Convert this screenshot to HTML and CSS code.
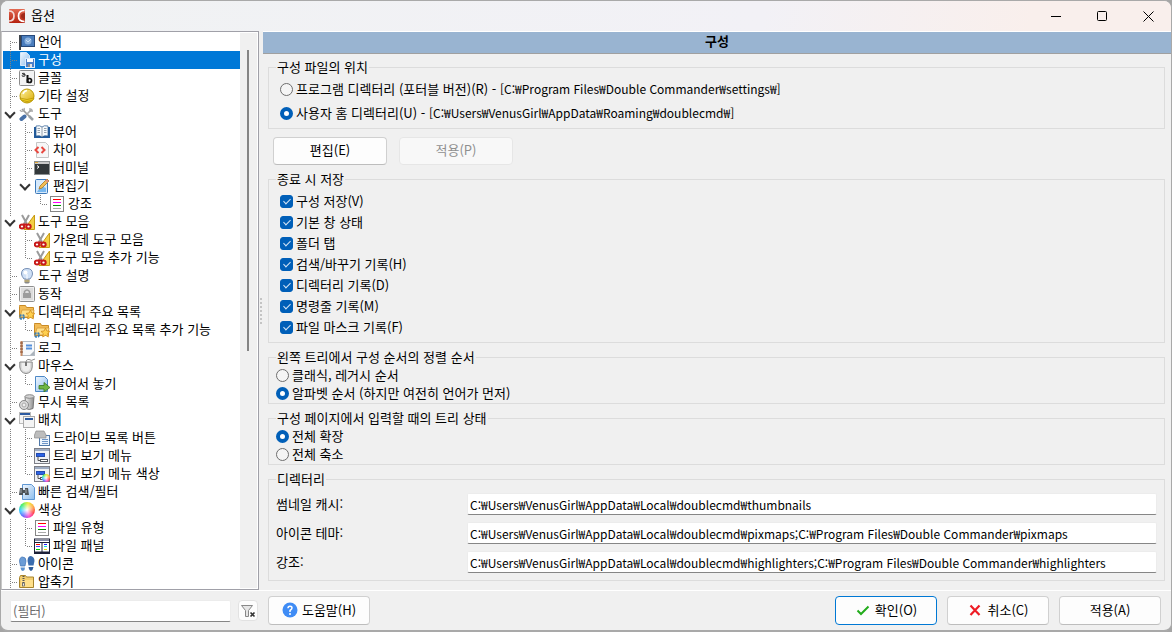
FILE: index.html
```
<!DOCTYPE html>
<html lang="ko">
<head>
  <meta charset="UTF-8">
  <meta name="viewport" content="width=device-width, initial-scale=1.0">
  <title>옵션</title>
  <link rel="stylesheet" href="styles.css">
</head>
<body>
  <!-- 아이콘 모음 -->
  <svg class="sprite" width="0" height="0" aria-hidden="true">
    <defs>
      <linearGradient id="gold" x1="0" y1="0" x2="1" y2="1"><stop offset="0" stop-color="#fff3a0"/><stop offset="1" stop-color="#d9a800"/></linearGradient>
      <linearGradient id="steel" x1="0" y1="0" x2="1" y2="0"><stop offset="0" stop-color="#f4f4f4"/><stop offset="1" stop-color="#8c8c8c"/></linearGradient>
      <linearGradient id="sky" x1="0" y1="0" x2="1" y2="1"><stop offset="0" stop-color="#f2f8ff"/><stop offset="1" stop-color="#8dbdec"/></linearGradient>
      <linearGradient id="red" x1="0" y1="0" x2="0" y2="1"><stop offset="0" stop-color="#e26a52"/><stop offset="1" stop-color="#b5220f"/></linearGradient>
    </defs>
    <symbol id="i-app" viewBox="0 0 16 16">
      <rect y="1" width="16" height="14" rx="1" fill="url(#red)"/>
      <path d="M0 3q5 0 5 5t-5 5" fill="none" stroke="#f3dcd8" stroke-width="1.700"/>
      <path d="M15.500 2.500q-6 0-6 5.500t6 5.500" fill="none" stroke="#fff" stroke-width="1.700"/>
      <path d="M16 5q-4 0-4 3t4 3z" fill="#a02a1a"/>
    </symbol>
    <symbol id="i-flag" viewBox="0 0 16 16">
      <path d="M1 1v15" stroke="#3f454c" stroke-width="2"/>
      <rect x="2.500" y="1.500" width="13" height="11" fill="#4a7dbd" stroke="#27497a"/>
      <circle cx="9" cy="7" r="3.500" fill="#8db3df"/><path d="M7 6l2 2 3-3" stroke="#c9dff5" fill="none"/>
    </symbol>
    <symbol id="i-config" viewBox="0 0 16 16">
      <path d="M1.500.5h6l3 3v10h-9z" fill="url(#sky)" stroke="#d7e8fa"/>
      <rect x="6.500" y="6.500" width="9" height="9" fill="#4a7fc9" stroke="#dbe9fa"/>
      <rect x="8" y="7" width="6" height="3" fill="#fff"/><rect x="9" y="12" width="4" height="3" fill="#e4e4e4"/><path d="M10 12v3" stroke="#333"/>
    </symbol>
    <symbol id="i-font" viewBox="0 0 16 16">
      <rect x=".5" y=".5" width="15" height="15" rx="1" fill="#f3f3f3" stroke="#8d8d8d"/>
      <path d="M3 3.500q3-1 3 1V6q-3 1-3-.3T6 4.500" fill="none" stroke="#333"/>
      <path d="M8.500 5v8" stroke="#111" stroke-width="2"/><circle cx="10.500" cy="10.500" r="2" fill="none" stroke="#111" stroke-width="1.700"/>
    </symbol>
    <symbol id="i-helmet" viewBox="0 0 16 16">
      <circle cx="8" cy="8" r="7" fill="url(#gold)" stroke="#b99700"/>
      <path d="M1 10q7 3 14 0l-1 2q-6 3-12 0z" fill="#f0d020" stroke="#b39100" stroke-width=".7"/>
      <path d="M4 6q1-3 4-3.500" stroke="#fff" stroke-width="1.500" fill="none"/>
    </symbol>
    <symbol id="i-tools" viewBox="0 0 16 16">
      <path d="M3 3l8 8" stroke="#999" stroke-width="1.700"/><path d="M10 10l4 4" stroke="#9ba0a4" stroke-width="2.500"/>
      <path d="M13 3L7 9" stroke="#aaa" stroke-width="1.700"/><path d="M5.500 10.500L2.500 13" stroke="#4870a6" stroke-width="4" stroke-linecap="round"/>
      <path d="M1 4q1 2 3 1t1-3M11 2v3h3" fill="none" stroke="#a6a6a6" stroke-width="1.300"/>
    </symbol>
    <symbol id="i-book" viewBox="0 0 16 16">
      <path d="M0 3h16v11H0z" fill="#225b9c"/><path d="M2 2q4-1 6 1 2-2 6-1v10q-4-1-6 1-2-2-6-1z" fill="#f7fafc" stroke="#27588e" stroke-width=".7"/>
      <path d="M8 3v10M3.500 4.500H6M3.500 6.500H6M3.500 8.500H6M10 4.500h2.500M10 6.500h2.500M10 8.500h2.500" stroke="#7d8c99" stroke-width=".8"/>
    </symbol>
    <symbol id="i-diff" viewBox="0 0 16 16">
      <path d="M2.500.5h9l3 3v12h-12z" fill="#f7f7f7" stroke="#c5c5c5"/>
      <path d="M4.500 5L1.500 8l3 3M7.500 5l3 3-3 3" fill="none" stroke="#e8483f" stroke-width="2"/>
    </symbol>
    <symbol id="i-term" viewBox="0 0 16 16">
      <rect x=".5" y="1.500" width="15" height="13" fill="#33383a" stroke="#8d9192"/>
      <rect x="1" y="2" width="14" height="2" fill="#c9c9c9"/><path d="M1 2.500h3" stroke="#e3a735"/><path d="M3 5.500l2 1.500-2 1.500" fill="none" stroke="#fff"/>
    </symbol>
    <symbol id="i-edit" viewBox="0 0 16 16">
      <rect x="1.500" y="1.500" width="12" height="14" rx="1" fill="#d6e9fb" stroke="#3c78b8"/>
      <path d="M3 14l4-6 5 2v4z" fill="#77b7ee"/><path d="M5 11l1-3 7-7 2 2-7 7z" fill="#f2bd54" stroke="#a87522" stroke-width=".8"/><path d="M12 2l2 2" stroke="#de8d83" stroke-width="2"/>
    </symbol>
    <symbol id="i-lines" viewBox="0 0 16 16">
      <rect x="1.500" y=".5" width="13" height="15" fill="#fff" stroke="#858585"/>
      <path d="M4 3.500h8" stroke="#f00"/><path d="M4 6.500h8" stroke="#f0f"/><path d="M4 9.500h8" stroke="#009000"/><path d="M4 12.500h8" stroke="#aaa"/>
    </symbol>
    <symbol id="i-cut" viewBox="0 0 16 16">
      <path d="M15.500 1v14.500H5z" fill="#f3cf45" stroke="#c79a12"/>
      <path d="M3 1l5 9M10 1L5 10" stroke="#9b9b9b" stroke-width="2"/>
      <ellipse cx="3" cy="12.500" rx="2.200" ry="1.900" fill="#fff" stroke="#c81a1a" stroke-width="2"/><ellipse cx="9.500" cy="12.500" rx="2.200" ry="1.900" fill="#fff" stroke="#c81a1a" stroke-width="2"/>
      <path d="M4 10.500h4" stroke="#c81a1a" stroke-width="2"/>
    </symbol>
    <symbol id="i-bulb" viewBox="0 0 16 16">
      <path d="M8 .5q5.500 0 5.500 5.500 0 2-2.500 5H5Q2.500 8 2.500 6 2.500.5 8 .5z" fill="#cfe0f6" stroke="#7790b5"/>
      <circle cx="6.500" cy="4.500" r="2" fill="#fff"/><path d="M8 6v5" stroke="#fff"/><path d="M5.500 11.500h5v3l-1 1h-3l-1-1z" fill="#888"/><path d="M5.500 13h5" stroke="#e2c562"/>
    </symbol>
    <symbol id="i-lock" viewBox="0 0 16 16">
      <rect x=".5" y=".5" width="15" height="15" rx="1" fill="#efefef" stroke="#8f8f8f"/><rect x="2" y="2" width="12" height="12" fill="#dcdcdc"/>
      <rect x="4" y="7" width="8" height="5" fill="#9b9b9b"/><path d="M5.500 7V5.500q2.500-3 5 0V7" fill="none" stroke="#9b9b9b" stroke-width="1.500"/>
    </symbol>
    <symbol id="i-folder" viewBox="0 0 16 16">
      <path d="M.5 2.500v-1h6l1 2h7v10H.5z" fill="#f2bb55" stroke="#c98a25"/><path d="M1 13l2-7h12l-1 7z" fill="#ffe08c" stroke="#d49a37" stroke-width=".8"/>
      <path d="M11.500 6l1.400 3 3 .4-2.200 2.200.6 3.400-2.800-1.700L8.700 15l.6-3.400L7 9.400l3-.4z" fill="#ffd04e" stroke="#d18c1d" stroke-width=".8"/><circle cx="3" cy="13" r="2" fill="none" stroke="#3c7fb5" stroke-width="2" stroke-dasharray="2 1"/>
    </symbol>
    <symbol id="i-log" viewBox="0 0 16 16">
      <rect x="3" y="1.500" width="12.500" height="14" fill="#f7f9fb" stroke="#b5bcc4"/><path d="M2.500 1v15" stroke="#c58a62" stroke-width="2"/><path d="M1 3h3M1 6h3M1 9h3M1 12h3" stroke="#884b2b"/>
      <path d="M7 5.500h6M7 8.500h6" stroke="#5590dc" stroke-width="2"/><path d="M11 15l4-4v4z" fill="#aab3bb"/>
    </symbol>
    <symbol id="i-mouse" viewBox="0 0 16 16">
      <path d="M7 5q0-4 3-3.500 2 2 6-.5" fill="none" stroke="#8b8b8b"/><path d="M.8 4h12.400v5q-.5 6-6.200 6.500Q1.500 15 .8 9z" fill="#dcdcdc" stroke="#888"/>
      <path d="M3 5v5q.5 3 4 3.500 3.500-.5 4-3.500V5z" fill="#efefef"/><rect x="6" y="4" width="2" height="4" fill="#777"/>
    </symbol>
    <symbol id="i-drop" viewBox="0 0 16 16">
      <path d="M1.500.5h9l3 3v12h-12z" fill="url(#sky)" stroke="#4d88c6"/><path d="M5 9.500h5V6.500l6 5-6 4.500v-3H5z" fill="#6fb645" stroke="#38761d" stroke-width=".8"/>
    </symbol>
    <symbol id="i-trash" viewBox="0 0 16 16">
      <path d="M6 2.500h9l-1 12q-4 2-7 0z" fill="url(#steel)" stroke="#777"/><ellipse cx="10.500" cy="2.500" rx="4.500" ry="1.800" fill="#d4d4d4" stroke="#888"/><circle cx="5" cy="11" r="4.500" fill="#dadada" stroke="#888"/><circle cx="5" cy="11" r="2" fill="#eee" stroke="#aaa"/>
    </symbol>
    <symbol id="i-layout" viewBox="0 0 16 16">
      <rect x=".5" y=".5" width="11" height="11" fill="#f4f4f4" stroke="#bbb"/><path d="M1 2h10" stroke="#2d5ba0" stroke-width="2"/>
      <rect x="4.500" y="4.500" width="11" height="11" fill="#f4f4f4" stroke="#aaa"/><path d="M6 7h8" stroke="#2d5ba0" stroke-width="2"/>
    </symbol>
    <symbol id="i-drive" viewBox="0 0 16 16">
      <rect x="5.500" y="5.500" width="10" height="10" fill="#edf4fc" stroke="#5078a8"/><path d="M8 9.500h6M8 11.500h6M8 13.500h6" stroke="#6d95c7"/>
      <path d="M2 1h8l2 4v3H.5V5z" fill="#bdbdbd" stroke="#8b8b8b" stroke-width=".7"/>
    </symbol>
    <symbol id="i-menu" viewBox="0 0 16 16">
      <rect x=".5" y=".5" width="15" height="15" fill="#eef0f4" stroke="#7d7f87"/><path d="M1 2h14" stroke="#9dabc2" stroke-width="2"/>
      <rect x="2.500" y="5.500" width="8" height="3" fill="#2b62e6" stroke="#234bb0"/><path d="M4 8.500v4h2" stroke="#555" fill="none"/><rect x="6.500" y="11.500" width="7" height="2" fill="#fff" stroke="#50545c"/>
    </symbol>
    <symbol id="i-find" viewBox="0 0 16 16">
      <path d="M3.500.5h9l3 3v12h-12z" fill="url(#sky)" stroke="#5f97d3"/><path d="M1 4h3v2h2V4h3l1 7H6V9H4v2H0z" fill="#4d5358"/><path d="M2 5v4M7 5v4" stroke="#a4a9ad"/>
    </symbol>
    <symbol id="i-panels" viewBox="0 0 16 16">
      <rect x=".5" y="1" width="15" height="14.500" fill="#fff" stroke="#1c2038"/><path d="M1 2.500h14" stroke="#8388a8"/><path d="M0 4.500h16M8 4v11" stroke="#1c2038"/><path d="M0 14.500h16" stroke="#1c2038" stroke-width="2"/>
      <path d="M2 6.500h4" stroke="#f00"/><path d="M2 8.500h4" stroke="#44f"/><path d="M2 11.500h4" stroke="#0c0"/><path d="M10 6.500h3" stroke="#22f"/><path d="M10 8.500h3" stroke="#0dd"/><path d="M10 11.500h3" stroke="#dd0"/>
    </symbol>
    <symbol id="i-feet" viewBox="0 0 16 16">
      <path d="M3.500 1Q7 1 7 5l-1 5H1.500L.5 5.500Q.5 1 3.500 1z" fill="#6b9cd6" stroke="#3f73b4" stroke-width=".7"/><path d="M1.500 11.500h4.500q0 3-2 3.500-2 0-2.500-3.500z" fill="#5c92d0"/>
      <path d="M12 0q3.500 1 3.500 5l-1 4.500H9.500L8.500 5Q8.500 0 12 0z" fill="#3a6cae"/><path d="M9.500 11h5q-.5 3-2.500 4-2-.5-2.500-4z" fill="#2e5c9a"/>
    </symbol>
    <symbol id="i-zip" viewBox="0 0 16 16">
      <path d="M.5 3.500l1-2h5l1 1.500h7v10.500H.5z" fill="#f3ce70" stroke="#a8842c"/><path d="M2 6h12v7H2z" fill="#ffe08c"/><path d="M4.500 2v9" stroke="#555" stroke-width="2" stroke-dasharray="1 1"/><rect x="3.500" y="9" width="2" height="3" fill="#eee" stroke="#555" stroke-width=".7"/>
    </symbol>
    <symbol id="i-funnel" viewBox="0 0 16 16">
      <path d="M1.500 2.500h11l-4 5v6h-3v-6z" fill="#e6e6e6" stroke="#888"/><path d="M10.500 9.500l4 4M14.500 9.500l-4 4" stroke="#333" stroke-width="1.700"/>
    </symbol>
    <symbol id="i-help" viewBox="0 0 16 16">
      <circle cx="8" cy="8" r="7.500" fill="#3f8cf5"/><path d="M6 6.300q0-2 2-2t2 1.700q0 1.200-2 2.500V10" fill="none" stroke="#fff" stroke-width="1.500"/><circle cx="8" cy="12" r="1" fill="#fff"/>
    </symbol>
    <symbol id="i-ok" viewBox="0 0 16 16"><path d="M2.500 8.500l3.500 3.500 7.500-7.500" fill="none" stroke="#23ac1c" stroke-width="2"/></symbol>
    <symbol id="i-cancel" viewBox="0 0 16 16"><path d="M3.500 3.500l9 9.500M12.500 3.500l-9 9.500" fill="none" stroke="#ee1c25" stroke-width="2.200"/></symbol>
  </svg>

  <div class="window">
    <header class="titlebar">
      <svg class="icon"><use href="#i-app"/></svg>
      <h1 class="titlebar-text">옵션</h1>
      <button class="win-btn" type="button" aria-label="최소화"><svg width="11" height="11"><path d="M0 5.500h10" stroke="#000"/></svg></button>
      <button class="win-btn" type="button" aria-label="최대화"><svg width="11" height="11"><rect x=".5" y=".5" width="9" height="9" rx="1" fill="none" stroke="#000"/></svg></button>
      <button class="win-btn" type="button" aria-label="닫기"><svg width="11" height="11"><path d="M.5.5l10 10M10.500.5l-10 10" stroke="#000"/></svg></button>
    </header>

    <main class="main">
      <!-- 왼쪽 트리 -->
      <nav class="sidebar">
        <ul class="tree">
          <li class="node"><i class="cell tee first"></i><svg class="icon"><use href="#i-flag"/></svg><span>언어</span></li>
          <li class="node selected"><i class="cell tee"></i><svg class="icon"><use href="#i-config"/></svg><span>구성</span></li>
          <li class="node"><i class="cell tee"></i><svg class="icon"><use href="#i-font"/></svg><span>글꼴</span></li>
          <li class="node"><i class="cell tee"></i><svg class="icon"><use href="#i-helmet"/></svg><span>기타 설정</span></li>
          <li class="node"><i class="cell open"></i><svg class="icon"><use href="#i-tools"/></svg><span>도구</span></li>
          <li class="node"><i class="cell line"></i><i class="cell tee"></i><svg class="icon"><use href="#i-book"/></svg><span>뷰어</span></li>
          <li class="node"><i class="cell line"></i><i class="cell tee"></i><svg class="icon"><use href="#i-diff"/></svg><span>차이</span></li>
          <li class="node"><i class="cell line"></i><i class="cell tee"></i><svg class="icon"><use href="#i-term"/></svg><span>터미널</span></li>
          <li class="node"><i class="cell line"></i><i class="cell open"></i><svg class="icon"><use href="#i-edit"/></svg><span>편집기</span></li>
          <li class="node"><i class="cell line"></i><i class="cell"></i><i class="cell end"></i><svg class="icon"><use href="#i-lines"/></svg><span>강조</span></li>
          <li class="node"><i class="cell open"></i><svg class="icon"><use href="#i-cut"/></svg><span>도구 모음</span></li>
          <li class="node"><i class="cell line"></i><i class="cell tee"></i><svg class="icon"><use href="#i-cut"/></svg><span>가운데 도구 모음</span></li>
          <li class="node"><i class="cell line"></i><i class="cell end"></i><svg class="icon"><use href="#i-cut"/></svg><span>도구 모음 추가 기능</span></li>
          <li class="node"><i class="cell tee"></i><svg class="icon"><use href="#i-bulb"/></svg><span>도구 설명</span></li>
          <li class="node"><i class="cell tee"></i><svg class="icon"><use href="#i-lock"/></svg><span>동작</span></li>
          <li class="node"><i class="cell open"></i><svg class="icon"><use href="#i-folder"/></svg><span>디렉터리 주요 목록</span></li>
          <li class="node"><i class="cell line"></i><i class="cell end"></i><svg class="icon"><use href="#i-folder"/></svg><span>디렉터리 주요 목록 추가 기능</span></li>
          <li class="node"><i class="cell tee"></i><svg class="icon"><use href="#i-log"/></svg><span>로그</span></li>
          <li class="node"><i class="cell open"></i><svg class="icon"><use href="#i-mouse"/></svg><span>마우스</span></li>
          <li class="node"><i class="cell line"></i><i class="cell end"></i><svg class="icon"><use href="#i-drop"/></svg><span>끌어서 놓기</span></li>
          <li class="node"><i class="cell tee"></i><svg class="icon"><use href="#i-trash"/></svg><span>무시 목록</span></li>
          <li class="node"><i class="cell open"></i><svg class="icon"><use href="#i-layout"/></svg><span>배치</span></li>
          <li class="node"><i class="cell line"></i><i class="cell tee"></i><svg class="icon"><use href="#i-drive"/></svg><span>드라이브 목록 버튼</span></li>
          <li class="node"><i class="cell line"></i><i class="cell tee"></i><svg class="icon"><use href="#i-menu"/></svg><span>트리 보기 메뉴</span></li>
          <li class="node"><i class="cell line"></i><i class="cell end"></i><b class="icon stacked"><svg class="icon"><use href="#i-menu"/></svg><b class="wheel small"></b></b><span>트리 보기 메뉴 색상</span></li>
          <li class="node"><i class="cell tee"></i><svg class="icon"><use href="#i-find"/></svg><span>빠른 검색/필터</span></li>
          <li class="node"><i class="cell open"></i><b class="icon wheel"></b><span>색상</span></li>
          <li class="node"><i class="cell line"></i><i class="cell tee"></i><svg class="icon"><use href="#i-lines"/></svg><span>파일 유형</span></li>
          <li class="node"><i class="cell line"></i><i class="cell end"></i><svg class="icon"><use href="#i-panels"/></svg><span>파일 패널</span></li>
          <li class="node"><i class="cell tee"></i><svg class="icon"><use href="#i-feet"/></svg><span>아이콘</span></li>
          <li class="node"><i class="cell tee"></i><svg class="icon"><use href="#i-zip"/></svg><span>압축기</span></li>
        </ul>
        <div class="scrollbar"><div class="thumb"></div></div>
      </nav>

      <div class="splitter"></div>

      <!-- 오른쪽 설정 페이지 -->
      <section class="page">
        <h2 class="page-title">구성</h2>
        <div class="page-body">
          <fieldset class="group location">
            <legend>구성 파일의 위치</legend>
            <label class="option"><input type="radio" name="location"><span>프로그램 디렉터리 (포터블 버전)(R) - <span class="path">[C:₩Program Files₩Double Commander₩settings₩]</span></span></label>
            <label class="option"><input type="radio" name="location" checked><span>사용자 홈 디렉터리(U) - <span class="path">[C:₩Users₩VenusGirl₩AppData₩Roaming₩doublecmd₩]</span></span></label>
          </fieldset>

          <div class="actions">
            <button class="btn" type="button">편집(E)</button>
            <button class="btn" type="button" disabled>적용(P)</button>
          </div>

          <fieldset class="group save">
            <legend>종료 시 저장</legend>
            <label class="option"><input type="checkbox" checked><span>구성 저장(V)</span></label>
            <label class="option"><input type="checkbox" checked><span>기본 창 상태</span></label>
            <label class="option"><input type="checkbox" checked><span>폴더 탭</span></label>
            <label class="option"><input type="checkbox" checked><span>검색/바꾸기 기록(H)</span></label>
            <label class="option"><input type="checkbox" checked><span>디렉터리 기록(D)</span></label>
            <label class="option"><input type="checkbox" checked><span>명령줄 기록(M)</span></label>
            <label class="option"><input type="checkbox" checked><span>파일 마스크 기록(F)</span></label>
          </fieldset>

          <fieldset class="group compact">
            <legend>왼쪽 트리에서 구성 순서의 정렬 순서</legend>
            <label class="option"><input type="radio" name="sort"><span>클래식, 레거시 순서</span></label>
            <label class="option"><input type="radio" name="sort" checked><span>알파벳 순서 (하지만 여전히 언어가 먼저)</span></label>
          </fieldset>

          <fieldset class="group compact">
            <legend>구성 페이지에서 입력할 때의 트리 상태</legend>
            <label class="option"><input type="radio" name="tree" checked><span>전체 확장</span></label>
            <label class="option"><input type="radio" name="tree"><span>전체 축소</span></label>
          </fieldset>

          <fieldset class="group dirs">
            <legend>디렉터리</legend>
            <div class="dir-grid">
              <label for="thumbs">썸네일 캐시:</label>
              <input class="text path" id="thumbs" type="text" value="C:₩Users₩VenusGirl₩AppData₩Local₩doublecmd₩thumbnails">
              <label for="icons">아이콘 테마:</label>
              <input class="text path" id="icons" type="text" value="C:₩Users₩VenusGirl₩AppData₩Local₩doublecmd₩pixmaps;C:₩Program Files₩Double Commander₩pixmaps">
              <label for="hl">강조:</label>
              <input class="text path" id="hl" type="text" value="C:₩Users₩VenusGirl₩AppData₩Local₩doublecmd₩highlighters;C:₩Program Files₩Double Commander₩highlighters">
            </div>
          </fieldset>
        </div>
      </section>
    </main>

    <footer class="footer">
      <input class="text filter" type="text" placeholder="(필터)" aria-label="필터">
      <button class="btn clear" type="button" aria-label="필터 지우기"><svg class="icon"><use href="#i-funnel"/></svg></button>
      <button class="btn" type="button"><svg class="icon"><use href="#i-help"/></svg>도움말(H)</button>
      <div class="footer-right">
        <button class="btn default" type="button"><svg class="icon"><use href="#i-ok"/></svg>확인(O)</button>
        <button class="btn" type="button"><svg class="icon"><use href="#i-cancel"/></svg>취소(C)</button>
        <button class="btn" type="button">적용(A)</button>
      </div>
    </footer>
  </div>
</body>
</html>
```

FILE: styles.css
```
* {
    box-sizing: border-box;
}
body {
    margin: 0;
    background-color: #a5a5a5;
    color: #000;
    font-family: 'Noto Sans CJK KR', sans-serif;
    font-size: 13px;
    line-height: 18px;
}
button, input {
    font: inherit;
    color: inherit;
}
.sprite {
    position: absolute;
}
.icon {
    display: block;
    flex: none;
    width: 16px;
    height: 16px;
}
.path {
    font-size: 12px;
}
.window {
    display: flex;
    flex-direction: column;
    height: 100vh;
    background-color: #f0f0f0;
    border: 1px solid #a9a9a9;
    border-bottom-width: 2px;
    border-radius: 8px;
    overflow: hidden;
}

/* title bar */
.titlebar {
    display: flex;
    flex: none;
    align-items: center;
    height: 30px;
    padding-left: 8px;
    background: linear-gradient(100deg, #f0f2f3 0%, #f2f1f6 65%, #f9efec 88%);
}
.titlebar-text {
    flex: 1;
    margin: 0 0 2px 6px;
    font-size: 13px;
    font-weight: normal;
}
.win-btn {
    display: flex;
    align-items: center;
    justify-content: center;
    width: 46px;
    height: 30px;
    padding: 0;
    border: 0;
    background: none;
}

/* tree */
.main {
    display: flex;
    flex: 1;
    min-height: 0;
}
.sidebar {
    display: flex;
    flex: none;
    width: 258px;
    padding: 1px;
    background-color: #fff;
    border: 1px solid #a0a0a8;
    border-left-color: #c8c8c8;
    overflow: hidden;
}
.tree {
    flex: 1;
    margin: 0;
    padding: 0;
    list-style: none;
}
.node {
    display: flex;
    align-items: center;
    height: 18px;
    line-height: 14px;
    white-space: nowrap;
}
.node span {
    margin: 0 0 2px 3px;
}
.selected {
    background-color: #0078d7;
    color: #fff;
}
.cell {
    flex: none;
    position: relative;
    width: 15px;
    height: 18px;
}
.cell + .icon {
    margin-left: 1px;
}
.line, .tee, .end, .open {
    background-image: repeating-linear-gradient(#808080 0 1px, transparent 1px 2px);
    background-repeat: no-repeat;
    background-position: 7px 0;
    background-size: 1px 18px;
}
.end {
    background-size: 1px 10px;
}
.first {
    background-size: 1px 10px;
    background-position: 7px 8px;
}
.open {
    background-size: 1px 4px;
}
.tee::after, .end::after {
    content: "";
    position: absolute;
    left: 8px;
    top: 9px;
    width: 7px;
    height: 1px;
    background-image: repeating-linear-gradient(90deg, transparent 0 1px, #808080 1px 2px);
}
.open::after {
    content: "";
    position: absolute;
    left: 3px;
    top: 4px;
    width: 6px;
    height: 6px;
    border: solid #333;
    border-width: 0 2px 2px 0;
    transform: rotate(45deg);
}
.wheel {
    border-radius: 50%;
    background: radial-gradient(#fff, transparent 65%), conic-gradient(from 60deg, #fa4, #f44, #f4c, #66f, #3cf, #4e6, #ee3, #fa4);
}
.stacked {
    position: relative;
}
.small {
    position: absolute;
    right: 0;
    bottom: 0;
    width: 8px;
    height: 8px;
}
.scrollbar {
    width: 17px;
    padding: 17px 7px 0;
    background-color: #f0f0f0;
}
.thumb {
    width: 2px;
    height: 56%;
    background-color: #858585;
}
.splitter {
    flex: none;
    align-self: center;
    width: 4px;
    height: 28px;
    background: radial-gradient(circle, #c4c4c4 1px, transparent 1px) center / 4px 4px repeat-y;
}

/* page */
.page {
    flex: 1;
    min-width: 0;
}
.page-title {
    height: 23px;
    margin: 0;
    border-top: 1px solid #fff;
    border-bottom: 1px solid #a0a0a0;
    background-color: #99b4d1;
    font-size: 13px;
    line-height: 18px;
    text-align: center;
}
.page-body {
    padding: 4px 6px 0 5px;
}
.group {
    min-width: 0;
    margin: 0 0 5px;
    padding: 0 7px;
    border: 1px solid #dcdcdc;
}
.group legend {
    height: 18px;
    padding: 0 1px;
}
.option {
    display: flex;
    align-items: center;
    height: 18px;
}
.option > span {
    margin-left: 3px;
    white-space: nowrap;
}
.location {
    padding: 1px 7px 3px;
    margin-bottom: 8px;
}
.location .option {
    height: 24px;
}
.save {
    padding: 3px 7px 4px;
}
.save .option {
    height: 21px;
}
.save .option > span {
    margin-bottom: 2px;
}
.compact {
    padding-bottom: 1px;
}
.location .option, .save .option {
    margin-left: 4px;
}
.option input {
    display: grid;
    place-items: center;
    flex: none;
    appearance: none;
    width: 13px;
    height: 13px;
    margin: 0;
    border: 1px solid #6e6e6e;
    background-color: #f5f5f5;
}
.option input[type="radio"] {
    border-radius: 50%;
}
.option input[type="radio"]:checked {
    border: 4px solid #005fb8;
    background-color: #fff;
}
.option input[type="checkbox"] {
    border-color: #005fb8;
    border-radius: 3px;
    background-color: #005fb8;
}
.option input[type="checkbox"]::after {
    content: "";
    width: 3px;
    height: 6px;
    margin-bottom: 2px;
    border: solid #d5e5f5;
    border-width: 0 1px 1px 0;
    transform: rotate(45deg);
}
.actions {
    display: flex;
    gap: 12px;
    margin: 0 5px 5px;
}
.btn {
    display: flex;
    align-items: center;
    justify-content: center;
    gap: 4px;
    width: 102px;
    height: 29px;
    padding: 0 0 2px;
    border: 1px solid #d0d0d0;
    border-bottom-color: #bdbdbd;
    border-radius: 4px;
    background-color: #fdfdfd;
}
.actions .btn {
    width: 114px;
    height: 28px;
}
.btn:disabled {
    border-color: #e6e6e6;
    background-color: #f8f8f8;
    color: #8f8f8f;
}
.dirs {
    padding: 5px 7px 7px;
}
.dir-grid {
    display: grid;
    grid-template-columns: 191px 1fr;
    gap: 7px 0;
    align-items: center;
}
.text {
    min-width: 0;
    height: 22px;
    padding: 0 2px;
    border: 1px solid #ececec;
    border-bottom-color: #868686;
    border-radius: 2px;
    background-color: #fff;
}

/* bottom buttons */
.footer {
    display: flex;
    flex: none;
    align-items: center;
    height: 40px;
    padding: 0 10px 0 9px;
    border-top: 1px solid #fff;
}
.filter {
    width: 221px;
}
.filter::placeholder {
    color: #6d6d6d;
    opacity: 1;
}
.clear {
    width: 20px;
    height: 21px;
    margin: 0 10px 0 7px;
    padding: 0;
    border-color: #e2e2e2;
}
.footer-right {
    display: flex;
    gap: 10px;
    margin-left: auto;
}
.default {
    border-color: #0078d4;
}
```
